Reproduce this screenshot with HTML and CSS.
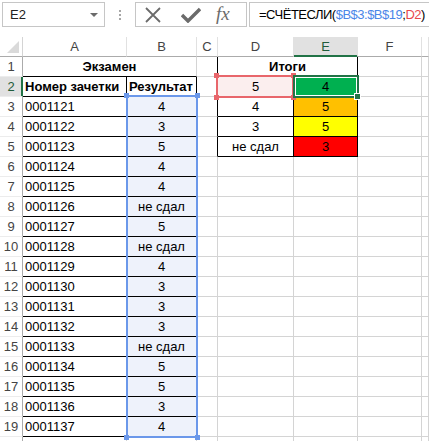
FILE: index.html
```html
<!DOCTYPE html>
<html>
  <head>
    <meta charset="utf-8">
    <link rel="stylesheet" href="styles.css">
  </head>
  <body>

    <div class="fbar">
      <div class="namebox">
        <span class="name">E2</span>
        <span class="drop"></span>
      </div>
      <div class="grip"><i></i><i></i><i></i></div>
      <div class="btns">
        <svg class="ico" width="18" height="16" viewBox="0 0 18 16">
          <path d="M2 1 L16 15 M16 1 L2 15" stroke="#6b6b6b" stroke-width="1.8" fill="none"/>
        </svg>
        <svg class="ico" width="20" height="16" viewBox="0 0 20 16">
          <path d="M1 8 L7 14 L19 2" stroke="#6b6b6b" stroke-width="3.4" fill="none"/>
        </svg>
        <span class="fx">fx</span>
      </div>
      <div class="formula">=СЧЁТЕСЛИ(<span class="ref-b">$B$3:$B$19</span>;<span class="ref-r">D2</span>)</div>
    </div>

    <div class="sheet">
      <div class="row hdr">
        <div class="corner"><span class="tri"></span></div>
        <div class="ch">A</div>
        <div class="ch">B</div>
        <div class="ch">C</div>
        <div class="ch">D</div>
        <div class="ch on">E</div>
        <div class="ch">F</div>
        <div class="ch"></div>
      </div>

      <div class="row">
        <div class="rh">1</div>
        <div class="c span2 b ctr bk-b">Экзамен</div>
        <div class="c bk-r"></div>
        <div class="c span2 b ctr bk-r bk-b">Итоги</div>
        <div class="c"></div>
        <div class="c"></div>
      </div>
      <div class="row">
        <div class="rh on">2</div>
        <div class="c b bk-r bk-b">Номер зачетки</div>
        <div class="c b bk-r bk-b">Результат</div>
        <div class="c bk-r"></div>
        <div class="c ctr bk-r bk-b pink">5</div>
        <div class="c ctr bk-r bk-b green">4</div>
        <div class="c"></div>
        <div class="c"></div>
      </div>
      <div class="row">
        <div class="rh">3</div>
        <div class="c bk-r bk-b">0001121</div>
        <div class="c ctr bk-r bk-b sel">4</div>
        <div class="c bk-r"></div>
        <div class="c ctr bk-r bk-b">4</div>
        <div class="c ctr bk-r bk-b orange">5</div>
        <div class="c"></div>
        <div class="c"></div>
      </div>
      <div class="row">
        <div class="rh">4</div>
        <div class="c bk-r bk-b">0001122</div>
        <div class="c ctr bk-r bk-b sel">3</div>
        <div class="c bk-r"></div>
        <div class="c ctr bk-r bk-b">3</div>
        <div class="c ctr bk-r bk-b yellow">5</div>
        <div class="c"></div>
        <div class="c"></div>
      </div>
      <div class="row">
        <div class="rh">5</div>
        <div class="c bk-r bk-b">0001123</div>
        <div class="c ctr bk-r bk-b sel">5</div>
        <div class="c bk-r"></div>
        <div class="c ctr bk-r bk-b">не сдал</div>
        <div class="c ctr bk-r bk-b red">3</div>
        <div class="c"></div>
        <div class="c"></div>
      </div>
      <div class="row">
        <div class="rh">6</div>
        <div class="c bk-r bk-b">0001124</div>
        <div class="c ctr bk-r bk-b sel">4</div>
        <div class="c"></div><div class="c"></div><div class="c"></div><div class="c"></div><div class="c"></div>
      </div>
      <div class="row">
        <div class="rh">7</div>
        <div class="c bk-r bk-b">0001125</div>
        <div class="c ctr bk-r bk-b sel">4</div>
        <div class="c"></div><div class="c"></div><div class="c"></div><div class="c"></div><div class="c"></div>
      </div>
      <div class="row">
        <div class="rh">8</div>
        <div class="c bk-r bk-b">0001126</div>
        <div class="c ctr bk-r bk-b sel">не сдал</div>
        <div class="c"></div><div class="c"></div><div class="c"></div><div class="c"></div><div class="c"></div>
      </div>
      <div class="row">
        <div class="rh">9</div>
        <div class="c bk-r bk-b">0001127</div>
        <div class="c ctr bk-r bk-b sel">5</div>
        <div class="c"></div><div class="c"></div><div class="c"></div><div class="c"></div><div class="c"></div>
      </div>
      <div class="row">
        <div class="rh">10</div>
        <div class="c bk-r bk-b">0001128</div>
        <div class="c ctr bk-r bk-b sel">не сдал</div>
        <div class="c"></div><div class="c"></div><div class="c"></div><div class="c"></div><div class="c"></div>
      </div>
      <div class="row">
        <div class="rh">11</div>
        <div class="c bk-r bk-b">0001129</div>
        <div class="c ctr bk-r bk-b sel">4</div>
        <div class="c"></div><div class="c"></div><div class="c"></div><div class="c"></div><div class="c"></div>
      </div>
      <div class="row">
        <div class="rh">12</div>
        <div class="c bk-r bk-b">0001130</div>
        <div class="c ctr bk-r bk-b sel">3</div>
        <div class="c"></div><div class="c"></div><div class="c"></div><div class="c"></div><div class="c"></div>
      </div>
      <div class="row">
        <div class="rh">13</div>
        <div class="c bk-r bk-b">0001131</div>
        <div class="c ctr bk-r bk-b sel">3</div>
        <div class="c"></div><div class="c"></div><div class="c"></div><div class="c"></div><div class="c"></div>
      </div>
      <div class="row">
        <div class="rh">14</div>
        <div class="c bk-r bk-b">0001132</div>
        <div class="c ctr bk-r bk-b sel">3</div>
        <div class="c"></div><div class="c"></div><div class="c"></div><div class="c"></div><div class="c"></div>
      </div>
      <div class="row">
        <div class="rh">15</div>
        <div class="c bk-r bk-b">0001133</div>
        <div class="c ctr bk-r bk-b sel">не сдал</div>
        <div class="c"></div><div class="c"></div><div class="c"></div><div class="c"></div><div class="c"></div>
      </div>
      <div class="row">
        <div class="rh">16</div>
        <div class="c bk-r bk-b">0001134</div>
        <div class="c ctr bk-r bk-b sel">5</div>
        <div class="c"></div><div class="c"></div><div class="c"></div><div class="c"></div><div class="c"></div>
      </div>
      <div class="row">
        <div class="rh">17</div>
        <div class="c bk-r bk-b">0001135</div>
        <div class="c ctr bk-r bk-b sel">5</div>
        <div class="c"></div><div class="c"></div><div class="c"></div><div class="c"></div><div class="c"></div>
      </div>
      <div class="row">
        <div class="rh">18</div>
        <div class="c bk-r bk-b">0001136</div>
        <div class="c ctr bk-r bk-b sel">3</div>
        <div class="c"></div><div class="c"></div><div class="c"></div><div class="c"></div><div class="c"></div>
      </div>
      <div class="row">
        <div class="rh">19</div>
        <div class="c bk-r bk-b">0001137</div>
        <div class="c ctr bk-r bk-b sel">4</div>
        <div class="c"></div><div class="c"></div><div class="c"></div><div class="c"></div><div class="c"></div>
      </div>
      <div class="row">
        <div class="rh"></div>
        <div class="c"></div><div class="c"></div><div class="c"></div><div class="c"></div><div class="c"></div><div class="c"></div><div class="c"></div>
      </div>

      <!-- selection overlays -->
      <div class="range-blue">
        <span class="hd tl"></span><span class="hd tr"></span>
        <span class="hd bl"></span><span class="hd br"></span>
      </div>
      <div class="range-red">
        <span class="hd tl"></span><span class="hd tr"></span>
        <span class="hd bl"></span><span class="hd br"></span>
      </div>
      <div class="active">
        <span class="fill-handle"></span>
      </div>
    </div>

  </body>
</html>
```

FILE: styles.css
```css
html, body {
  margin: 0;
  padding: 0;
  background: #fff;
  overflow: hidden;
}

body {
  font-family: "Liberation Sans", Arial, sans-serif;
  color: #000;
}

/* formula bar */

.fbar {
  display: flex;
  align-items: flex-start;
  height: 37px;
  padding: 2px 0 0 2px;
  box-sizing: border-box;
}

.namebox {
  display: flex;
  align-items: center;
  justify-content: space-between;
  width: 103px;
  height: 25px;
  box-sizing: border-box;
  border: 1px solid #c6c6c6;
  padding: 0 6px 0 7px;
}

.name {
  font-size: 13px;
  color: #222;
}

.drop {
  width: 0;
  height: 0;
  border-left: 4px solid transparent;
  border-right: 4px solid transparent;
  border-top: 4px solid #6b6b6b;
}

.grip {
  display: flex;
  flex-direction: column;
  gap: 2px;
  width: 30px;
  align-items: center;
  padding-top: 8px;
}

.grip i {
  display: block;
  width: 2px;
  height: 2px;
  background: #a6a6a6;
}

.btns {
  display: flex;
  align-items: center;
  width: 112px;
  height: 25px;
  box-sizing: border-box;
  border: 1px solid #c6c6c6;
  padding-left: 8px;
}

.btns .ico {
  margin-right: 19px;
}

.btns .ico + .ico {
  margin-right: 15px;
}

.fx {
  font-family: "Liberation Serif", "Times New Roman", serif;
  font-style: italic;
  font-size: 19px;
  color: #6b6b6b;
  margin-top: -2px;
}

.formula {
  flex: 1;
  height: 25px;
  margin-left: 2px;
  box-sizing: border-box;
  border: 1px solid #c6c6c6;
  border-right: none;
  padding-left: 9px;
  font-size: 13px;
  letter-spacing: -0.5px;
  line-height: 23px;
  white-space: nowrap;
  overflow: hidden;
}

.ref-b {
  color: #4a86e8;
}

.ref-r {
  color: #e8474c;
}

/* sheet */

.sheet {
  position: relative;
}

.row {
  display: grid;
  grid-template-columns: 23px 104px 70px 21px 76px 64px 64px 1fr;
  height: 20px;
}

.row > div {
  box-sizing: border-box;
  height: 20px;
}

.c {
  border-right: 1px solid #d4d4d4;
  border-bottom: 1px solid #d4d4d4;
  font-size: 13px;
  line-height: 20px;
  padding: 0 2px;
  white-space: nowrap;
  overflow: hidden;
}

.span2 {
  grid-column: span 2;
}

.b {
  font-weight: bold;
}

.ctr {
  text-align: center;
}

.bk-r {
  border-right-color: #000;
}

.bk-b {
  border-bottom-color: #000;
}

.sel {
  background: #eef2fb;
}

.pink {
  background: #fbeeee;
}

.green {
  background: #00b050;
}

.orange {
  background: #ffc000;
}

.yellow {
  background: #ffff00;
}

.red {
  background: #ff0000;
}

/* headers */

.corner {
  position: relative;
  border-right: 1px solid #d4d4d4;
  border-bottom: 1px solid #ababab;
}

.tri {
  position: absolute;
  right: 3px;
  bottom: 3px;
  width: 0;
  height: 0;
  border-left: 12px solid transparent;
  border-bottom: 12px solid #dadada;
}

.ch {
  border-right: 1px solid #e1e1e1;
  border-bottom: 1px solid #ababab;
  font-size: 13px;
  line-height: 20px;
  text-align: center;
  color: #444;
}

.ch.on {
  background: #e1e1e1;
  color: #1f5c3a;
  border-bottom-color: #217346;
  box-shadow: inset 0 -1px 0 #217346;
}

.rh {
  border-right: 1px solid #ababab;
  border-bottom: 1px solid #ececec;
  font-size: 13px;
  line-height: 20px;
  text-align: center;
  color: #444;
}

.rh.on {
  background: #e1e1e1;
  color: #1f5c3a;
  border-right-color: #217346;
  box-shadow: inset -1px 0 0 #217346;
}

/* selections */

.range-blue,
.range-red,
.active {
  position: absolute;
  box-sizing: border-box;
  border: 2px solid;
}

.range-blue {
  left: 126px;
  top: 58px;
  width: 72px;
  height: 343px;
  border-color: #6b98ea;
}

.range-red {
  left: 216px;
  top: 38px;
  width: 78px;
  height: 23px;
  border-color: #e8666b;
}

.active {
  left: 293px;
  top: 38px;
  width: 66px;
  height: 23px;
  border-color: #217346;
  box-shadow: inset 0 0 0 1px #fff;
}

.hd {
  position: absolute;
  width: 5px;
  height: 5px;
}

.range-blue .hd {
  background: #6b98ea;
}

.range-red .hd {
  background: #e8666b;
}

.hd.tl { left: -4px; top: -4px; }
.hd.tr { right: -4px; top: -4px; }
.hd.bl { left: -4px; bottom: -4px; }
.hd.br { right: -4px; bottom: -4px; }

.fill-handle {
  position: absolute;
  right: -4px;
  bottom: -4px;
  width: 5px;
  height: 5px;
  background: #217346;
  border: 1px solid #fff;
}
```
